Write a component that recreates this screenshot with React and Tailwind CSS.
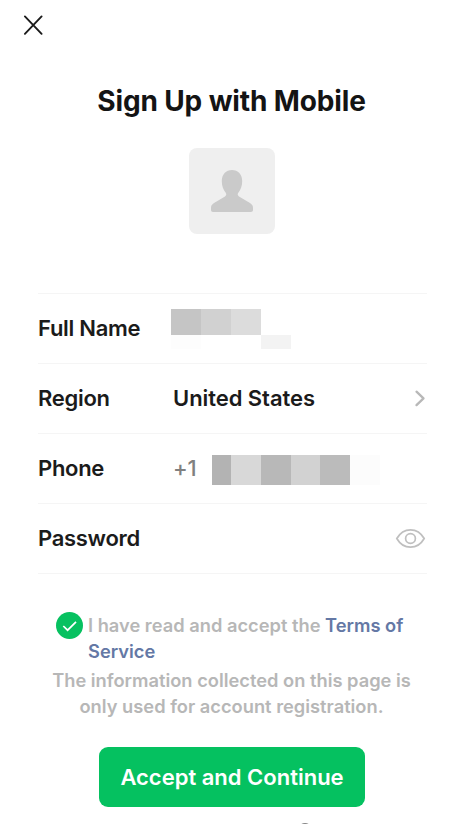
import React from 'react';

const Row = ({ label, children }) => (
  <div className="flex h-[70px] items-center border-b border-[#f5f5f5]">
    <span className="w-[133px] shrink-0 whitespace-nowrap text-[22px] font-semibold tracking-[-0.3px] text-[#1b1b1b]">
      {label}
    </span>
    {children}
  </div>
);

const App = () => {
  return (
    <div
      className="relative h-[824px] w-[463px] overflow-hidden bg-white"
      style={{ fontFamily: 'Inter, "Liberation Sans", sans-serif' }}
    >
      {/* Close */}
      <header className="flex h-[51px] items-center pl-[23px]">
        <button type="button" aria-label="Close">
          <svg width="20" height="21" viewBox="0 0 20 21" fill="none" stroke="#1b1b1b" strokeWidth="1.9" strokeLinecap="round" strokeLinejoin="round">
            <path d="M1.9 1.4L18.6 18.8M18.6 1.4L1.9 18.8" />
          </svg>
        </button>
      </header>

      <h1 className="mt-[32px] text-center text-[28px] leading-[36px] font-bold tracking-[-0.13px] text-[#141414]">
        Sign Up with Mobile
      </h1>

      {/* Avatar */}
      <div className="mx-auto mt-[29px] flex h-[86px] w-[86px] rounded-[8px] bg-[#efefef]">
        <svg width="86" height="86" viewBox="0 0 86 86" fill="#cacaca">
          <path d="M43 22C49 22 53.200 26.500 53.200 33C53.200 38.200 51.800 41.500 49.300 44.800C48.400 46.300 48.500 47.400 50 48.400L61 55C63.300 56.600 64 58 64 60V62C64 63.300 63.200 64 62 64H24C22.800 64 22 63.300 22 62V60C22 58 22.700 56.600 25 55L36 48.400C37.500 47.400 37.600 46.300 36.700 44.800C34.200 41.500 32.800 38.200 32.800 33C32.800 26.500 37 22 43 22Z" />
        </svg>
      </div>

      {/* Form */}
      <div className="mt-[59px] mr-[36px] ml-[38px] border-t border-[#f5f5f5]">
        <Row label="Full Name">
          <div className="grid grid-cols-[30px_30px_30px_30px] grid-rows-[26px_14px]">
            <span className="bg-[#c5c5c5]" />
            <span className="bg-[#d1d1d1]" />
            <span className="bg-[#dcdcdc]" />
            <span />
            <span className="bg-[#fdfdfd]" />
            <span className="col-start-4 bg-[#f3f3f3]" />
          </div>
        </Row>
        <Row label="Region">
          <span className="ml-[2px] flex-1 text-[22px] font-semibold tracking-[-0.06px] text-[#1b1b1b]">United States</span>
          <svg width="14" height="20" viewBox="0 0 14 20" fill="none" stroke="#b8b8b8" strokeWidth="2.3" strokeLinecap="round" strokeLinejoin="round">
            <path d="M3.5 2.700L10.500 9.400L3.500 16.100" />
          </svg>
        </Row>
        <Row label="Phone">
          <span className="ml-[2px] w-[39px] text-[22px] font-medium tracking-[-0.3px] text-[#808080]">+1</span>
          <div className="mt-[3px] flex h-[30px]">
            <span className="w-[19px] bg-[#b3b3b3]" />
            <span className="w-[30px] bg-[#d8d8d8]" />
            <span className="w-[30px] bg-[#b8b8b8]" />
            <span className="w-[29px] bg-[#d2d2d2]" />
            <span className="w-[30px] bg-[#bbbbbb]" />
            <span className="w-[30px] bg-[#fcfcfc]" />
          </div>
        </Row>
        <Row label="Password">
          <svg className="mr-px ml-auto" width="31" height="22" viewBox="0 0 31 22" fill="none" stroke="#bfbfbf" strokeWidth="1.7">
            <path d="M1.8 10.500C5 4.900 9.800 1.800 15.500 1.800S26 4.900 29.200 10.500C26 16.100 21.200 19.200 15.500 19.200S5 16.100 1.800 10.500Z" />
            <circle cx="15.500" cy="10.500" r="4.900" />
          </svg>
        </Row>
      </div>

      {/* Agreement */}
      <div className="mt-[38px] ml-[56px] flex text-[18.3px] leading-[26px] font-semibold text-[#b7b7b7]">
        <svg className="mr-[5px] shrink-0" width="27" height="27" viewBox="0 0 27 27" fill="none">
          <circle cx="13.500" cy="13.500" r="13.500" fill="#07c160" />
          <path d="M7.300 14L11.600 18.200L20 9.800" stroke="white" strokeWidth="1.700" />
        </svg>
        <p className="whitespace-nowrap">
          I have read and accept the <span className="text-[#6478a5]">Terms of<br />Service</span>
        </p>
      </div>
      <p className="mt-[3px] text-center text-[18.3px] leading-[26px] font-semibold whitespace-nowrap text-[#b7b7b7]">
        The information collected on this page is<br />only used for account registration.
      </p>

      <button type="button" className="mt-[28px] ml-[99px] flex h-[60px] w-[266px] items-center justify-center rounded-[9px] bg-[#05c160] text-[22px] font-semibold whitespace-nowrap text-white">
        Accept and Continue
      </button>

      {/* Top edge of the control below the fold */}
      <span className="absolute top-[823px] left-[298px] h-[14px] w-[14px] rounded-full border-2 border-[#858585]" />
    </div>
  );
};

export default App;
